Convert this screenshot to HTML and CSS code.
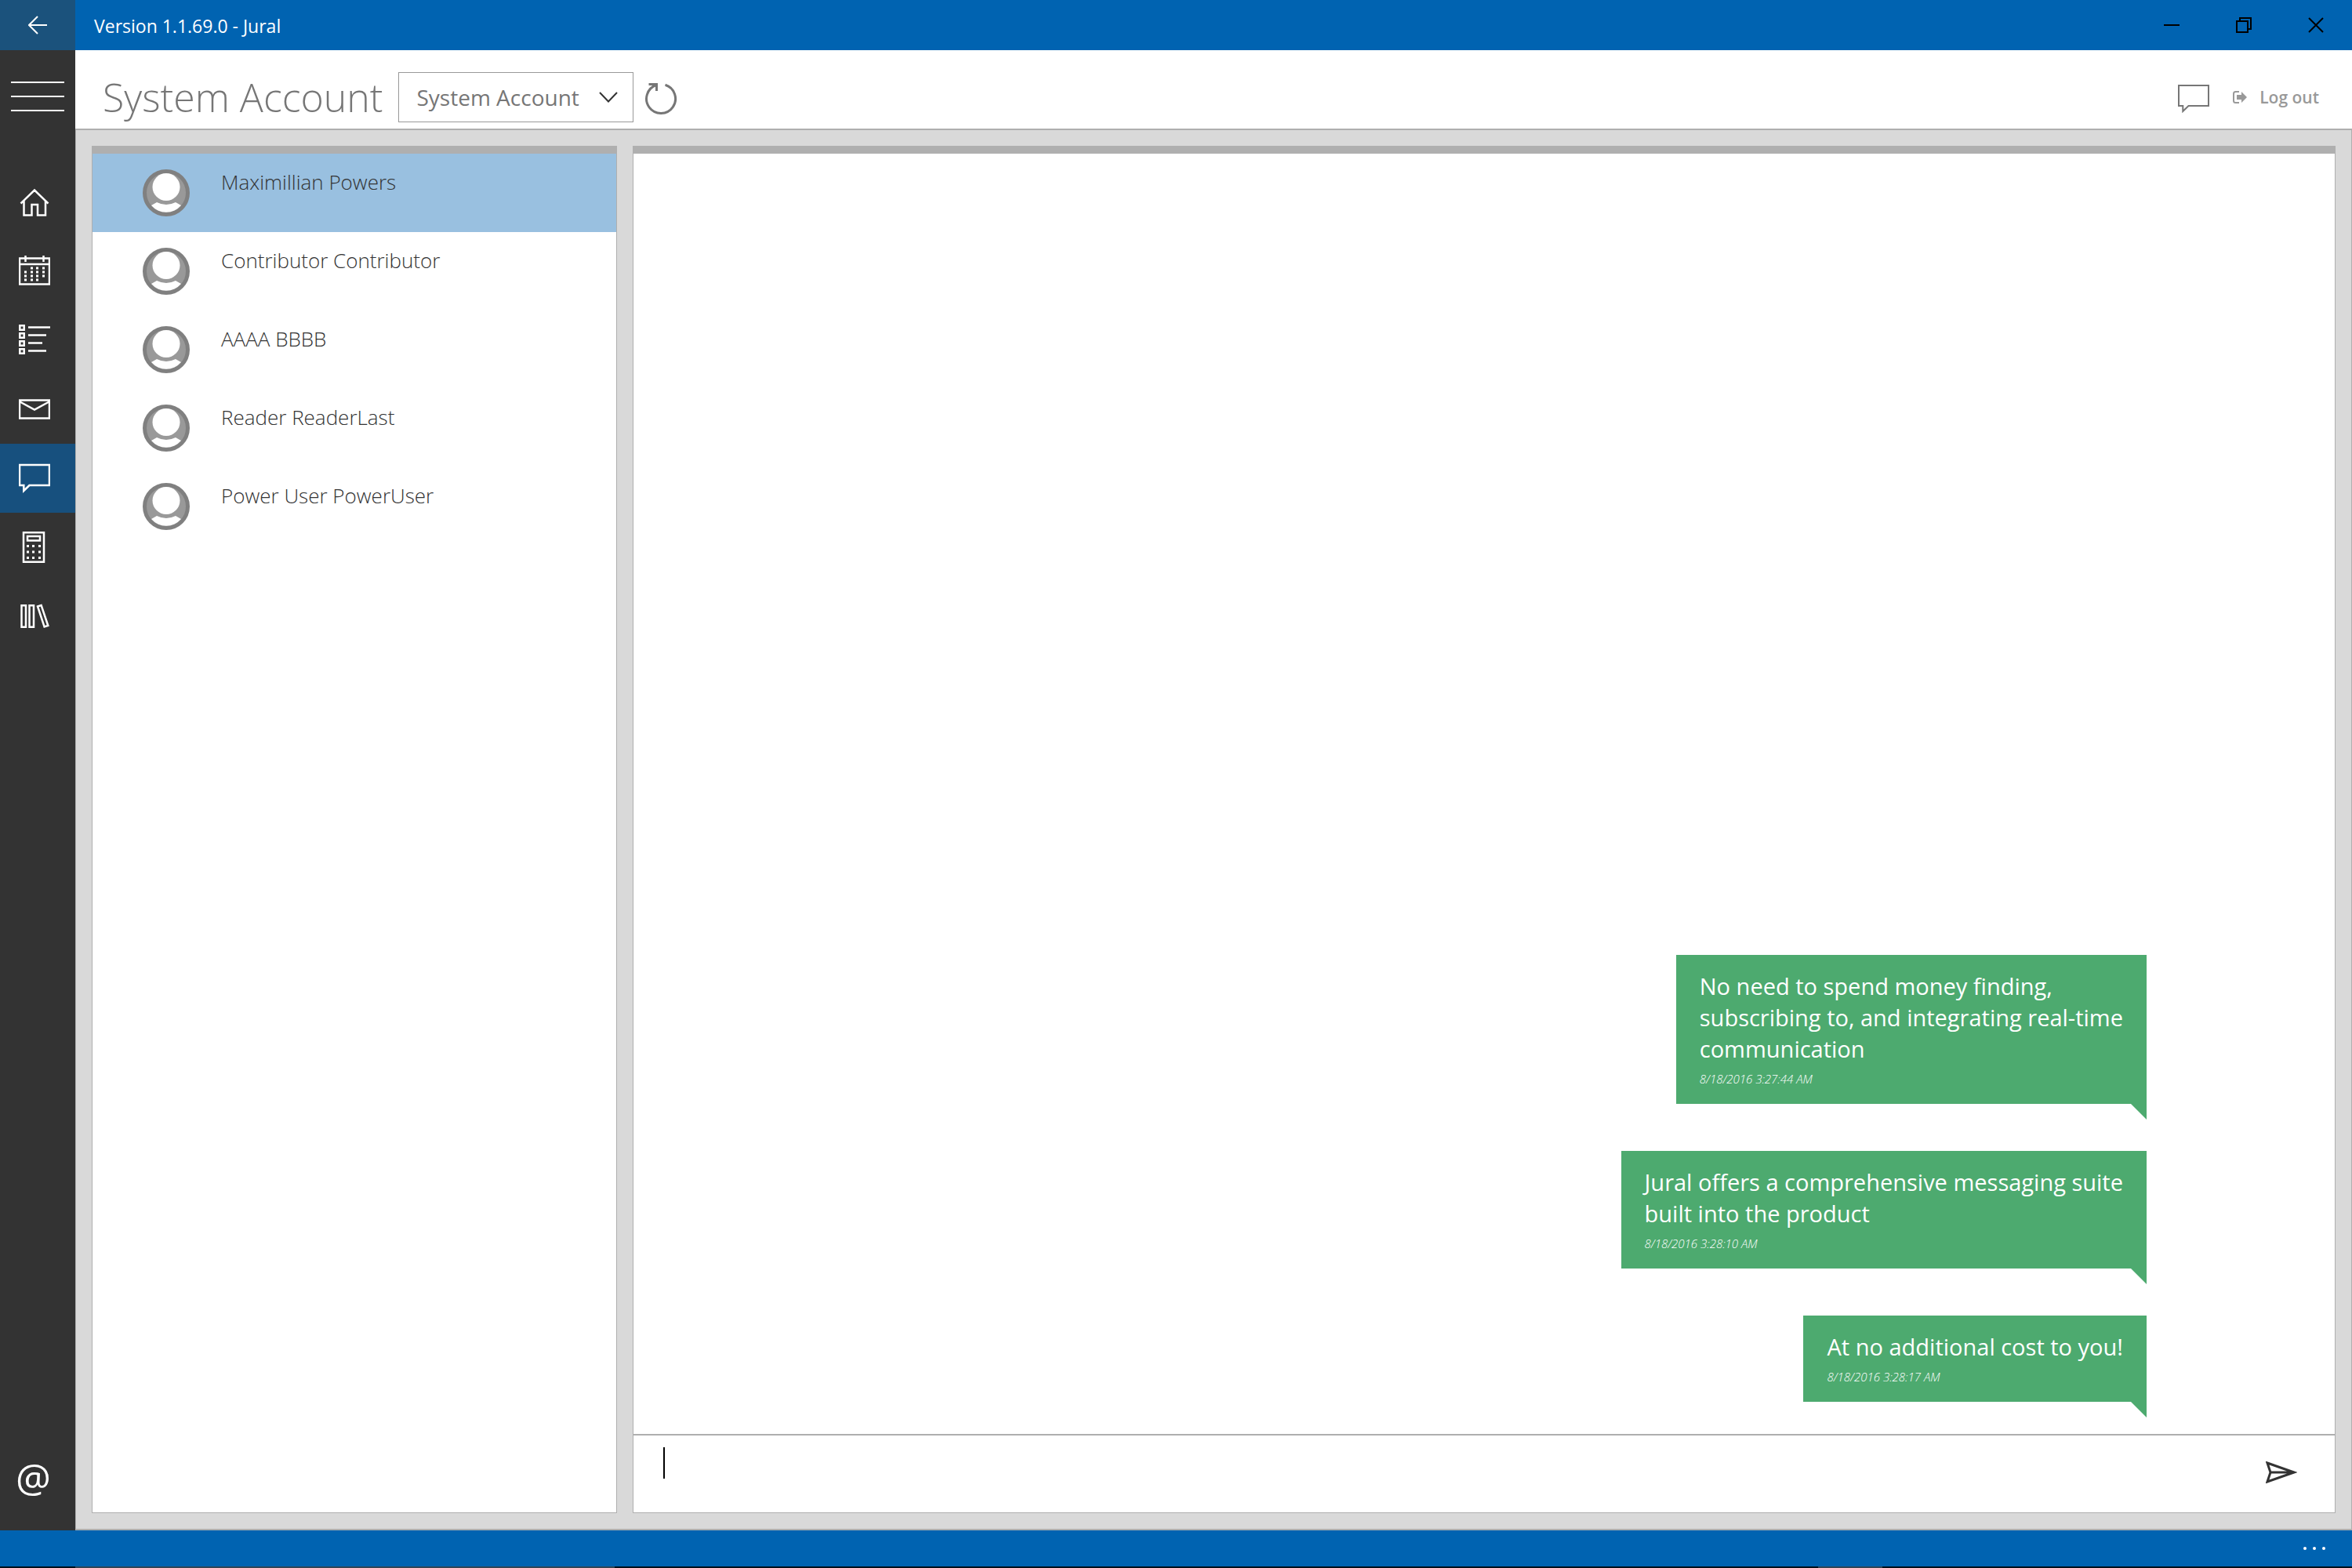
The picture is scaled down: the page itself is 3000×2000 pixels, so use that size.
FILE: index.html
```html
<!DOCTYPE html>
<html lang="en">
<head>
    <meta charset="UTF-8" />
    <meta name="viewport" content="width=device-width, initial-scale=1.0" />
    <title>Version 1.1.69.0 - Jural</title>
    <link rel="stylesheet" href="styles.css">
</head>
<body>
    <div class="app">
        <!-- Title bar -->
        <div class="titlebar">
            <button class="titlebar__back" aria-label="Back">
                <svg width="24" height="24" viewBox="0 0 24 24"><path d="M24 12H1M12 1L1 12L12 23" /></svg>
            </button>
            <span class="titlebar__text">Version 1.1.69.0 - Jural</span>
            <button class="titlebar__button" aria-label="Minimize">
                <svg width="20" height="20" viewBox="0 0 20 20"><path d="M0 10H20" /></svg>
            </button>
            <button class="titlebar__button" aria-label="Restore">
                <svg width="20" height="20" viewBox="0 0 20 20"><path d="M1 5H15V19H1ZM5 5V1H19V15H15" /></svg>
            </button>
            <button class="titlebar__button" aria-label="Close">
                <svg width="20" height="20" viewBox="0 0 20 20"><path d="M1 1L19 19M19 1L1 19" /></svg>
            </button>
        </div>

        <div class="body">
            <!-- Navigation rail -->
            <nav class="rail">
                <button class="rail__menu" aria-label="Menu"><span></span><span></span><span></span></button>
                <a class="rail__item" href="#" aria-label="Home">
                    <svg viewBox="0 0 40 40"><path d="M2.5 21.5L20 4.5L37.5 21.5M6.5 18V36.5H16.5V23H24V36.5H34V18" /></svg>
                </a>
                <a class="rail__item" href="#" aria-label="Calendar">
                    <svg viewBox="0 0 40 40">
                        <path d="M1 3.5H39V36.5H1ZM1 11H39M8.5 0V8M31.5 0V8" />
                        <path class="dots" d="M15 16h3M22 16h3M30 16h3M7 21h3M15 21h3M22 21h3M30 21h3M7 26h3M15 26h3M22 26h3M30 26h3M7 31h3M15 31h3M22 31h3" />
                    </svg>
                </a>
                <a class="rail__item" href="#" aria-label="Tasks">
                    <svg viewBox="0 0 40 40">
                        <path d="M1.3 1.3h5.4v5.4h-5.4zM1.3 11.3h5.4v5.4h-5.4zM1.3 21.3h5.4v5.4h-5.4zM1.3 31.3h5.4v5.4h-5.4z" />
                        <path d="M12 3.5H40M12 13.5H35M12 23.5H30M12 33.5H35" />
                    </svg>
                </a>
                <a class="rail__item" href="#" aria-label="Mail">
                    <svg viewBox="0 0 40 40"><path d="M1 8.5H39V31.5H1ZM1.5 10.5L20 20.5L38.5 10.5" /></svg>
                </a>
                <a class="rail__item rail__item--active" href="#" aria-label="Messages">
                    <svg viewBox="0 0 40 40"><path d="M1 3H39V29H13.5L6.3 36V29H1Z" /></svg>
                </a>
                <a class="rail__item" href="#" aria-label="Calculator">
                    <svg viewBox="0 0 40 40">
                        <path d="M6 1.3H32V38.7H6ZM11 6H27V11.5H11Z" />
                        <path class="dots" d="M10 18.5h3M17 18.5h3M25 18.5h3M10 26h3M17 26h3M25 26h3M10 33.5h3M17 33.5h3M25 33.5h3" />
                    </svg>
                </a>
                <a class="rail__item" href="#" aria-label="Library">
                    <svg viewBox="0 0 40 40"><path d="M3.5 6.3H9V33.7H3.5ZM13.5 6.3H19V33.7H13.5ZM24 7.5L28.6 6L37.3 32L32.6 33.5Z" /></svg>
                </a>
                <a class="rail__item rail__item--bottom" href="#">@</a>
            </nav>

            <div class="page">
                <header class="header">
                    <h1 class="header__title">System Account</h1>
                    <div class="account">
                        <select class="account__select" aria-label="Account">
                            <option>System Account</option>
                        </select>
                        <svg class="account__arrow" width="24" height="14" viewBox="0 0 24 14"><path d="M1 1L12 12.5L23 1" /></svg>
                    </div>
                    <button class="header__refresh" aria-label="Refresh">
                        <svg width="42" height="44" viewBox="0 0 42 44"><path d="M26.5 6.3A18.5 18.5 0 1 1 15 6.5M5.5 5.5H15.5V14" /></svg>
                    </button>
                    <button class="header__chat" aria-label="Messages">
                        <svg width="40" height="40" viewBox="0 0 40 40"><path d="M1 5H39V31H13.5L6.3 38V31H1Z" /></svg>
                    </button>
                    <a class="logout" href="#">
                        <svg width="18" height="16" viewBox="0 0 18 16">
                            <path class="logout__door" d="M8 1H3.5Q1 1 1 3.5V12.5Q1 15 3.5 15H8" />
                            <path class="logout__arrow" d="M5 5H11V1L18 8L11 15V11H5Z" />
                        </svg>
                        Log out
                    </a>
                </header>

                <main class="content">
                    <ul class="contacts">
                        <li class="contact contact--active">
                            <svg class="avatar" viewBox="0 0 60 60"><use href="#person" /></svg>
                            <span>Maximillian Powers</span>
                        </li>
                        <li class="contact">
                            <svg class="avatar" viewBox="0 0 60 60"><use href="#person" /></svg>
                            <span>Contributor Contributor</span>
                        </li>
                        <li class="contact">
                            <svg class="avatar" viewBox="0 0 60 60"><use href="#person" /></svg>
                            <span>AAAA BBBB</span>
                        </li>
                        <li class="contact">
                            <svg class="avatar" viewBox="0 0 60 60"><use href="#person" /></svg>
                            <span>Reader ReaderLast</span>
                        </li>
                        <li class="contact">
                            <svg class="avatar" viewBox="0 0 60 60"><use href="#person" /></svg>
                            <span>Power User PowerUser</span>
                        </li>
                    </ul>

                    <section class="chat">
                        <div class="messages">
                            <div class="message">
                                <p class="message__text">No need to spend money finding,<br>subscribing to, and integrating real-time<br>communication</p>
                                <time class="message__time">8/18/2016 3:27:44 AM</time>
                            </div>
                            <div class="message">
                                <p class="message__text">Jural offers a comprehensive messaging suite<br>built into the product</p>
                                <time class="message__time">8/18/2016 3:28:10 AM</time>
                            </div>
                            <div class="message">
                                <p class="message__text">At no additional cost to you!</p>
                                <time class="message__time">8/18/2016 3:28:17 AM</time>
                            </div>
                        </div>
                        <form class="composer">
                            <span class="composer__caret"></span>
                            <textarea class="composer__input" aria-label="Message"></textarea>
                            <button class="composer__send" type="button" aria-label="Send">
                                <svg width="40" height="28" viewBox="0 0 40 28"><path d="M2 2L36 14L2 26L6 14ZM6 14H36" /></svg>
                            </button>
                        </form>
                    </section>
                </main>
            </div>
        </div>

        <!-- App bar -->
        <footer class="appbar">
            <button class="appbar__more" aria-label="More">
                <svg width="28" height="4" viewBox="0 0 28 4"><circle cx="2" cy="2" r="2" /><circle cx="14" cy="2" r="2" /><circle cx="26" cy="2" r="2" /></svg>
            </button>
        </footer>
        <div class="taskbar"><span></span><span></span><span></span><span></span></div>
    </div>

    <svg class="symbols" width="0" height="0">
        <symbol id="person" viewBox="0 0 60 60">
            <circle cx="30" cy="30" r="27.5" fill="#999" stroke="#808080" stroke-width="5" />
            <circle cx="30" cy="22.5" r="17.5" fill="#fff" />
            <path d="M11 46L18 42Q30 48 42 42L49 46A25 25 0 0 1 11 46Z" fill="#fff" />
        </symbol>
    </svg>
</body>
</html>
```
FILE: styles.css
```css
/* General styles */
* {
    box-sizing: border-box;
}

body {
    margin: 0;
    font-family: "Open Sans", "Noto Sans", sans-serif;
    font-size: 28px;
    color: #333;
}

button {
    padding: 0;
    border: none;
    background: none;
    font: inherit;
    cursor: pointer;
}

svg {
    display: block;
    fill: none;
    stroke-width: 2;
}

a {
    color: inherit;
    text-decoration: none;
}

.app {
    display: flex;
    flex-direction: column;
    height: 100vh;
}

.symbols {
    position: absolute;
    top: 0;
}

/* Title bar */
.titlebar {
    display: flex;
    height: 64px;
    background: #0063b1;
    color: #fff;
}

.titlebar__back {
    display: flex;
    align-items: center;
    justify-content: center;
    width: 96px;
    background: #1b527c;
    stroke: #fff;
}

.titlebar__text {
    flex: 1;
    padding-left: 24px;
    font-size: 23px;
    line-height: 66px;
}

.titlebar__button {
    display: flex;
    align-items: center;
    justify-content: center;
    width: 92px;
    stroke: #000;
}

.body {
    display: flex;
    flex: 1;
    min-height: 0;
}

/* Navigation rail */
.rail {
    display: flex;
    flex-direction: column;
    width: 96px;
    background: #333;
    color: #fff;
    stroke: #fff;
}

.rail__menu {
    display: flex;
    flex-direction: column;
    gap: 16px;
    padding: 40px 14px;
    margin-bottom: 32px;
}

.rail__menu span {
    width: 68px;
    height: 2px;
    background: #fff;
}

.rail__item {
    display: flex;
    align-items: center;
    height: 88px;
    padding-left: 24px;
}

.rail__item svg {
    width: 40px;
    height: 40px;
    stroke-width: 2.5;
}

.rail__item .dots {
    stroke-width: 3;
}

.rail__item--active {
    background: #17507e;
}

.rail__item--bottom {
    padding-left: 20px;
    margin-top: auto;
    margin-bottom: 24px;
    font-size: 50px;
}

.page {
    display: flex;
    flex: 1;
    flex-direction: column;
    min-width: 0;
}

/* Header */
.header {
    display: flex;
    align-items: center;
    height: 102px;
    padding: 20px 42px 0 35px;
    border-bottom: 2px solid #afafaf;
    color: #767676;
    stroke: #767676;
}

.header__title {
    margin: 0 20px 0 0;
    font-size: 50px;
    font-weight: 300;
    line-height: 60px;
}

.account {
    position: relative;
    width: 300px;
}

.account__select {
    display: block;
    width: 100%;
    height: 64px;
    padding: 0 48px 0 22px;
    border: 1px solid #999;
    border-radius: 0;
    background: #fff;
    appearance: none;
    color: #767676;
    font-family: inherit;
    font-size: 28px;
}

.account__arrow {
    position: absolute;
    top: 25px;
    right: 20px;
    stroke: #333;
    pointer-events: none;
}

.header__refresh {
    margin-left: 14px;
    stroke: #767676;
}

.header__refresh svg {
    stroke-width: 3;
}

.header__chat {
    margin-left: auto;
    stroke: #767676;
}

.logout {
    display: flex;
    align-items: center;
    gap: 16px;
    margin-left: 30px;
    color: #999;
    font-size: 21px;
    font-weight: 600;
}

.logout__door {
    stroke: #999;
}

.logout__arrow {
    fill: #999;
    stroke: none;
}

/* Content */
.content {
    display: flex;
    flex: 1;
    gap: 20px;
    min-height: 0;
    padding: 20px;
    border: solid #afafaf;
    border-width: 0 1px 2px;
    background: #d9d9d9;
}

.contacts,
.chat {
    margin: 0;
    border: 1px solid #afafaf;
    border-top-width: 10px;
    background: #fff;
}

.contacts {
    width: 670px;
    padding: 0;
    list-style: none;
}

.contact {
    display: flex;
    gap: 40px;
    height: 100px;
    padding: 20px 64px;
    font-size: 26px;
    font-weight: 300;
    line-height: 32px;
}

.contact--active {
    background: #99c0e0;
}

.avatar {
    width: 60px;
    height: 60px;
}

.chat {
    display: flex;
    flex: 1;
    flex-direction: column;
}

/* Messages */
.messages {
    display: flex;
    flex: 1;
    flex-direction: column;
    align-items: flex-end;
    justify-content: flex-end;
    gap: 60px;
    padding: 0 240px 41px 0;
}

.message {
    position: relative;
    padding: 20px 30px;
    background: #4daa6f;
    color: #fff;
}

/* Speech tail under the right corner */
.message::after {
    content: "";
    position: absolute;
    top: 100%;
    right: 0;
    border-top: 20px solid #4daa6f;
    border-left: 20px solid transparent;
}

.message__text {
    margin: 0;
    font-size: 29px;
    line-height: 40px;
}

.message__time {
    display: block;
    margin-top: 6px;
    font-size: 15px;
    font-style: italic;
    font-weight: 300;
    line-height: 24px;
}

.composer {
    display: flex;
    height: 100px;
    padding: 15px 48px 0 38px;
    border-top: 2px solid #afafaf;
}

.composer__caret {
    width: 2px;
    height: 40px;
    background: #000;
}

.composer__input {
    flex: 1;
    height: 64px;
    padding: 0;
    border: none;
    outline: none;
    resize: none;
    font: inherit;
}

.composer__send {
    height: 64px;
    stroke: #333;
}

.composer__send svg {
    stroke-width: 3;
}

/* App bar */
.appbar {
    display: flex;
    justify-content: flex-end;
    height: 46px;
    padding: 0 34px;
    background: #0063b1;
}

.appbar__more svg {
    fill: #fff;
}

/* Edge of the task bar */
.taskbar {
    display: grid;
    grid-template-columns: 96px 688px 1fr 82px 599px;
    height: 2px;
    background: #00101c;
}

.taskbar span:nth-child(2),
.taskbar span:nth-child(4) {
    background: #2f4656;
}
```
